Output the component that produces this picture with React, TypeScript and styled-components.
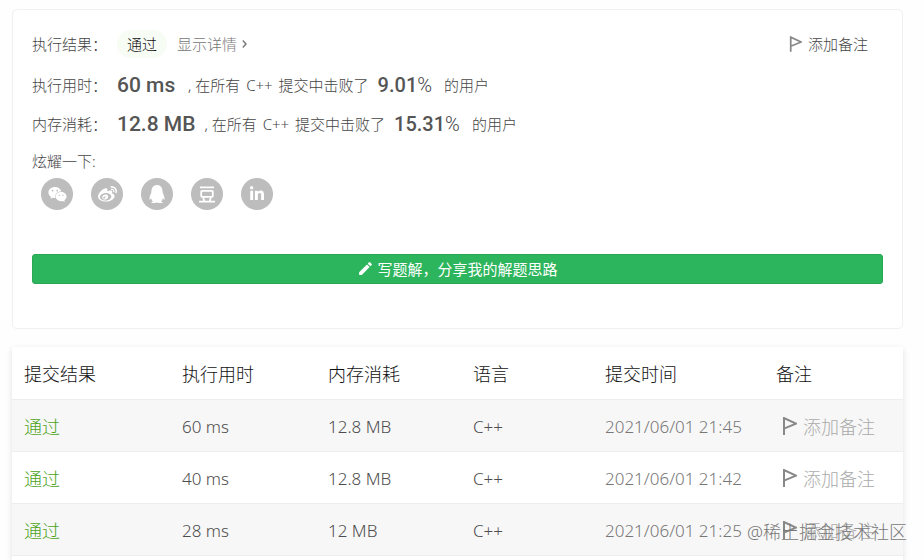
import React from "react";
import styled, { createGlobalStyle } from "styled-components";
import { FaWeixin, FaWeibo, FaQq, FaLinkedinIn } from "react-icons/fa";
import { MdEdit } from "react-icons/md";

const GlobalStyle = createGlobalStyle`
  * { box-sizing: border-box; }
  body {
    margin: 0;
    background: #fefefe;
    color: #444;
    font-family: "Noto Sans", "Noto Sans CJK SC", sans-serif;
    font-size: 15px;
    font-weight: 300;
  }
  button { font: inherit; color: inherit; border: 0; background: none; padding: 0; cursor: pointer; }
`;

const Page = styled.main`
  position: relative;
  display: flex;
  flex-direction: column;
  gap: 18px;
  min-height: 100vh;
  padding: 9px 21px 0 12px;
  overflow: hidden;
`;

const Card = styled.section`
  padding: 13px 19px 44px;
  background: #fff;
  border: 1px solid #f0f0f0;
  border-radius: 5px;
`;

const Row = styled.div<{ $height: number }>`
  display: flex;
  align-items: center;
  height: ${(p) => p.$height}px;
  line-height: 20px;
  white-space: nowrap;
`;

const Label = styled.span`
  width: 85px;
`;

const Status = styled.span`
  padding: 4px 10px;
  border-radius: 14px;
  background: #f7fcf4;
  color: #111;
`;

const DetailButton = styled.button`
  display: flex;
  align-items: center;
  gap: 5px;
  margin-left: 10px;
  && { color: #777; }
`;

const NoteButton = styled.button<{ $muted?: boolean }>`
  display: flex;
  align-items: center;
  gap: 6px;
  margin-left: ${(p) => (p.$muted ? "6px" : "auto")};
  margin-right: ${(p) => (p.$muted ? "0" : "15px")};
  && { color: ${(p) => (p.$muted ? "#aaa" : "#444")}; }
  svg { color: #888; }
`;

const Stat = styled.strong`
  min-width: 62px;
  font-family: Roboto, sans-serif;
  font-size: 21px;
  font-weight: 500;
  color: #555;
`;

const Rate = styled.strong`
  font-family: Roboto, sans-serif;
  font-size: 20px;
  font-weight: 500;
  color: #555;
`;

const Percent = styled.span`
  margin-right: 12px;
  font-family: Roboto, sans-serif;
  font-size: 20px;
  font-weight: 300;
`;

const Phrase = styled.span`
  margin: 0 9px;
`;

const Language = styled.span`
  margin: 0 2px;
`;

const Share = styled.div`
  display: flex;
  gap: 18px;
  padding-left: 9px;
`;

const ShareButton = styled.button`
  display: grid;
  place-items: center;
  width: 32px;
  height: 32px;
  border-radius: 50%;
  && { background: #bdbdbd; color: #fff; }
`;

const WriteButton = styled.button`
  display: flex;
  align-items: center;
  justify-content: center;
  gap: 3px;
  width: 100%;
  height: 30px;
  margin-top: 44px;
  border-radius: 3px;
  && {
    padding-bottom: 2px;
    background: #2db55d;
    border: 1px solid #28a754;
    color: #fff;
    font-weight: 400;
  }
`;

const Panel = styled.section`
  flex: 1;
  background: #fff;
  box-shadow: 0 2px 6px rgba(0, 0, 0, 0.12);
`;

const Table = styled.table`
  width: 100%;
  table-layout: fixed;
  border-collapse: collapse;
  text-align: left;
  white-space: nowrap;
`;

const Head = styled.th`
  height: 52px;
  padding: 0 12px;
  font-size: 18px;
  font-weight: 300;
  color: #111;
`;

const Line = styled.tr`
  border-top: 1px solid #eee;
  &:nth-child(odd) { background: #f7f7f7; }
  &:last-child { border-bottom: 1px solid #eee; }
`;

const Cell = styled.td<{ $light?: boolean; $cjk?: boolean }>`
  height: 52px;
  padding: 2px 12px 0;
  font-size: ${(p) => (p.$cjk ? 18 : 17)}px;
  color: ${(p) => (p.$light ? "#777" : "#4d4d4d")};
`;

const ResultLink = styled.a`
  color: #4ba31a;
  text-decoration: none;
`;

const Watermark = styled.div`
  position: absolute;
  right: 17px;
  bottom: 14px;
  font-size: 18px;
  line-height: 28px;
  color: #777;
  pointer-events: none;
`;

const Flag = ({ size }: { size: number }) => (
  <svg width={size} height={size + 4} viewBox="0 0 15 19" fill="none" stroke="currentColor" strokeWidth="2" aria-hidden="true">
    <path d="M2 18V1L14 6.6L2 11.6" />
  </svg>
);

const Chevron = () => (
  <svg width="5" height="8" viewBox="0 0 5 8" fill="none" stroke="currentColor" strokeWidth="1.4" aria-hidden="true">
    <path d="M0.8 0.6L4 4L0.8 7.4" />
  </svg>
);

const Douban = () => (
  <svg width="16" height="17" viewBox="0 0 16 17" fill="none" stroke="currentColor" strokeWidth="1.8" aria-hidden="true">
    <path d="M1 1.3H15M0 15.7H16M4.2 11.5L5.4 15.5M11.8 11.5L10.6 15.5" />
    <rect x="2.2" y="4.8" width="11.6" height="6" rx="0.8" />
  </svg>
);

const stats = [
  { label: "执行用时：", value: "60 ms", percent: "9.01", height: 40 },
  { label: "内存消耗：", value: "12.8 MB", percent: "15.31", height: 38 },
];

const networks = [
  { name: "微信", icon: <FaWeixin size={19} /> },
  { name: "微博", icon: <FaWeibo size={19} /> },
  { name: "QQ", icon: <FaQq size={18} /> },
  { name: "豆瓣", icon: <Douban /> },
  { name: "LinkedIn", icon: <FaLinkedinIn size={16} /> },
];

const columns = [
  { title: "提交结果", width: 158 },
  { title: "执行用时", width: 146 },
  { title: "内存消耗", width: 145 },
  { title: "语言", width: 132 },
  { title: "提交时间", width: 171 },
  { title: "备注", width: 139 },
];
const total = columns.reduce((sum, c) => sum + c.width, 0);

const Col = styled.col<{ $share: number }>`
  width: ${(p) => p.$share}%;
`;

const submissions = [
  { time: "60 ms", memory: "12.8 MB", date: "2021/06/01 21:45" },
  { time: "40 ms", memory: "12.8 MB", date: "2021/06/01 21:42" },
  { time: "28 ms", memory: "12 MB", date: "2021/06/01 21:25" },
];

export default function App() {
  return (
    <Page lang="zh-CN">
      <GlobalStyle />
      <Card>
        <Row $height={42}>
          <Label>执行结果：</Label>
          <Status>通过</Status>
          <DetailButton>显示详情 <Chevron /></DetailButton>
          <NoteButton><Flag size={13} />添加备注</NoteButton>
        </Row>
        {stats.map((s) => (
          <Row key={s.label} $height={s.height}>
            <Label>{s.label}</Label>
            <Stat>{s.value}</Stat>
            <Phrase>, 在所有 <Language>C++</Language> 提交中击败了</Phrase>
            <Rate>{s.percent}</Rate>
            <Percent>%</Percent>
            <span>的用户</span>
          </Row>
        ))}
        <Row $height={35}>炫耀一下:</Row>
        <Share>
          {networks.map((n) => (
            <ShareButton key={n.name} aria-label={n.name}>{n.icon}</ShareButton>
          ))}
        </Share>
        <WriteButton><MdEdit size={17} />写题解，分享我的解题思路</WriteButton>
      </Card>
      <Panel>
        <Table>
          <colgroup>
            {columns.map((c) => <Col key={c.title} $share={(c.width / total) * 100} />)}
          </colgroup>
          <thead>
            <tr>{columns.map((c) => <Head key={c.title} scope="col">{c.title}</Head>)}</tr>
          </thead>
          <tbody>
            {submissions.map((s) => (
              <Line key={s.date}>
                <Cell $cjk><ResultLink href="#">通过</ResultLink></Cell>
                <Cell>{s.time}</Cell>
                <Cell>{s.memory}</Cell>
                <Cell>C++</Cell>
                <Cell $light>{s.date}</Cell>
                <Cell $cjk><NoteButton $muted><Flag size={15} />添加备注</NoteButton></Cell>
              </Line>
            ))}
          </tbody>
        </Table>
      </Panel>
      <Watermark>@稀土掘金技术社区</Watermark>
    </Page>
  );
}
